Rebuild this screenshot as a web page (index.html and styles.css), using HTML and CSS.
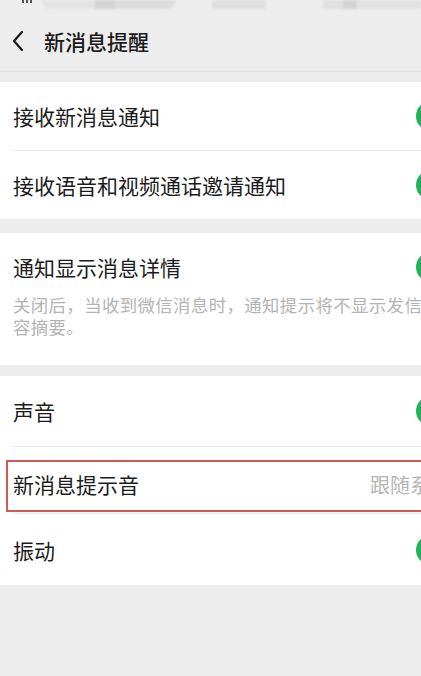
FILE: index.html
```html
<!DOCTYPE html>
<html lang="zh-CN">
<head>
    <meta charset="UTF-8">
    <meta name="viewport" content="width=device-width, initial-scale=1.0">
    <title>新消息提醒</title>
    <link rel="stylesheet" href="styles.css">
</head>
<body>
    <div class="status-bar">
        <span class="signal"></span>
        <span class="blur-pill"></span>
        <span class="blur-block mid"></span>
        <span class="blur-block right"></span>
    </div>

    <div class="header">
        <svg class="back" width="14" height="22" viewBox="0 0 14 22">
            <path d="M11 2 L3 11 L11 20" fill="none" stroke="#1a1a1a" stroke-width="2.2" stroke-linecap="round" stroke-linejoin="round"/>
        </svg>
        <h1 class="title">新消息提醒</h1>
    </div>

    <div class="group">
        <div class="row">
            <span class="label">接收新消息通知</span>
            <span class="switch"></span>
        </div>
        <div class="divider"></div>
        <div class="row">
            <span class="label">接收语音和视频通话邀请通知</span>
            <span class="switch"></span>
        </div>
    </div>

    <div class="group group-detail">
        <div class="row row-top">
            <span class="label">通知显示消息详情</span>
            <span class="switch"></span>
        </div>
        <p class="desc">关闭后，当收到微信消息时，通知提示将不显示发信人和内<br>容摘要。</p>
    </div>

    <div class="group group-sound">
        <div class="row row-sound">
            <span class="label">声音</span>
            <span class="switch"></span>
        </div>
        <div class="divider"></div>
        <div class="row-marked">
            <div class="marked-box">
                <span class="label">新消息提示音</span>
                <span class="value">跟随系统</span>
            </div>
        </div>
        <div class="divider"></div>
        <div class="row row-vibrate">
            <span class="label">振动</span>
            <span class="switch"></span>
        </div>
    </div>
</body>
</html>
```

FILE: styles.css
```css
body {
    margin: 0;
    width: 421px;
    height: 676px;
    overflow: hidden;
    background-color: #ededed;
    font-family: "Noto Sans CJK SC", "Noto Sans", sans-serif;
    color: #1c1c1c;
}

/* blurred status bar at the very top */
.status-bar {
    height: 11px;
    display: flex;
    align-items: flex-start;
    overflow: hidden;
}

.signal {
    width: 12px;
    height: 3px;
    margin-left: 22px;
    background: repeating-linear-gradient(90deg, #555 0 2px, transparent 2px 4px);
}

.blur-pill {
    width: 136px;
    height: 9px;
    margin-left: 8px;
    border-radius: 0 0 8px 8px;
    background: linear-gradient(90deg, #e4e4e4 0 40%, #d3d3d3 40% 55%, #dcdcdc 55% 100%);
    filter: blur(1px);
}

.blur-block {
    height: 9px;
    background: #dedede;
    filter: blur(1px);
}

.blur-block.mid {
    width: 55px;
    margin-left: 37px;
}

.blur-block.right {
    width: 100px;
    margin-left: 57px;
    background: linear-gradient(90deg, #e0e0e0 0 20%, #d3d3d3 20% 35%, #e2e2e2 35% 100%);
}

.header {
    height: 60px;
    display: flex;
    align-items: center;
    padding-left: 11px;
    border-bottom: 1px solid #dddddd;
}

.back {
    display: block;
}

.title {
    margin: 0 0 0 19px;
    font-size: 21px;
    font-weight: 500;
    color: #1a1a1a;
}

.group {
    background-color: #ffffff;
    margin-top: 10px;
    margin-right: -60px;
}

.row {
    height: 68px;
    display: flex;
    align-items: center;
    justify-content: space-between;
    padding: 0 13px;
}

.label {
    font-size: 21px;
    line-height: 30px;
}

.switch {
    width: 52px;
    height: 30px;
    border-radius: 15px;
    background-color: #1fb35b;
    flex-shrink: 0;
}

.divider {
    height: 1px;
    margin-left: 12px;
    background-color: #ebebeb;
}

.group-detail {
    margin-top: 14px;
    height: 132px;
}

.row-top {
    height: auto;
    padding-top: 19px;
}

.desc {
    margin: 12px 0 0;
    padding: 0 13px;
    font-size: 17.4px;
    line-height: 22px;
    letter-spacing: 0.4px;
    color: #b3b3b3;
    white-space: nowrap;
}

.group-sound {
    margin-top: 11px;
}

.row-sound {
    height: 70px;
}

.row-marked {
    padding: 13px 0 1px 6px;
}

.marked-box {
    height: 48px;
    display: flex;
    align-items: center;
    justify-content: space-between;
    padding: 0 31px 0 5px;
    border: 2px solid #d25a53;
    border-right: none;
}

.marked-box .label {
    margin-top: -4px;
}

.value {
    font-size: 20px;
    color: #b5b5b5;
    margin-top: -4px;
}

.row-vibrate {
    height: 71px;
}
```
